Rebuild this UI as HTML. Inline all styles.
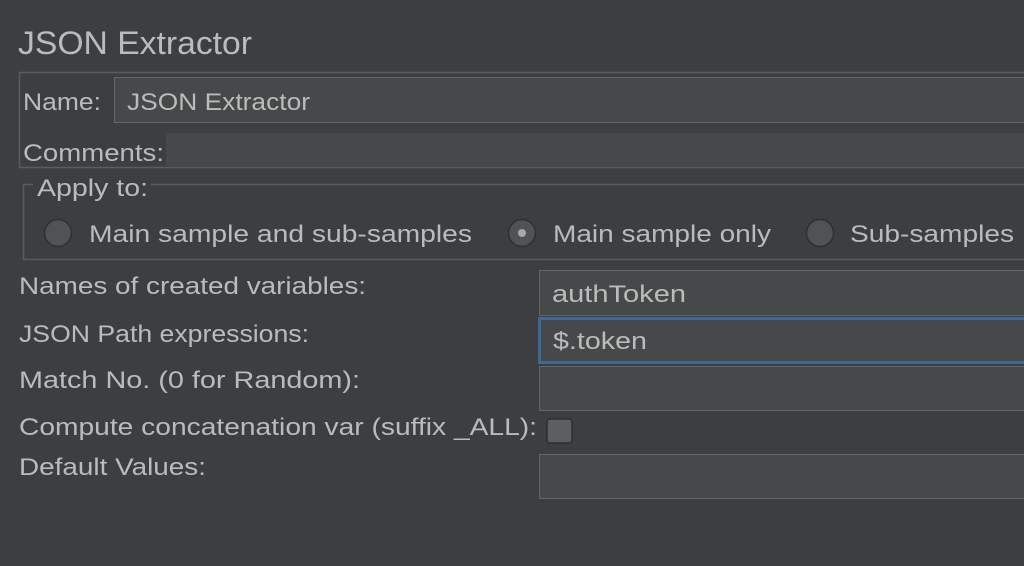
<!DOCTYPE html>
<html><head><meta charset="utf-8"><style>
html,body{margin:0;padding:0;background:#3c3f41;}
svg{display:block}
text{font-family:"Liberation Sans","DejaVu Sans",sans-serif;fill:#bbbbbb;}
</style></head><body>
<svg width="1024" height="566" viewBox="0 0 1024 566" xmlns="http://www.w3.org/2000/svg">
<rect width="1024" height="566" fill="#3c3f41"/>
<text x="18" y="54" font-size="32" textLength="234" lengthAdjust="spacingAndGlyphs">JSON Extractor</text>
<rect x="19.5" y="72.5" width="1010" height="95" fill="none" stroke="#5a5d60" stroke-width="1.5"/>
<rect x="114.5" y="77.5" width="915" height="45" fill="#45494a" stroke="#666" stroke-width="1"/>
<text x="23" y="110" font-size="24" textLength="78" lengthAdjust="spacingAndGlyphs">Name:</text>
<text x="127" y="110" font-size="24" textLength="183" lengthAdjust="spacingAndGlyphs">JSON Extractor</text>
<rect x="166" y="133" width="860" height="33" fill="#45494a"/>
<text x="23" y="161" font-size="24" textLength="141" lengthAdjust="spacingAndGlyphs">Comments:</text>
<path d="M33 184.5 H23.5 V259.5 H1030 M151 184.5 H1030" fill="none" stroke="#5a5d60" stroke-width="1.5"/>
<text x="37" y="196" font-size="24" textLength="111" lengthAdjust="spacingAndGlyphs">Apply to:</text>
<circle cx="58" cy="233" r="13.5" fill="#505356" stroke="#2d2f31" stroke-width="1.5"/>
<circle cx="522" cy="233" r="13.5" fill="#505356" stroke="#2d2f31" stroke-width="1.5"/>
<circle cx="522" cy="233" r="4" fill="#a8a8a8"/>
<circle cx="820" cy="233" r="13.5" fill="#505356" stroke="#2d2f31" stroke-width="1.5"/>
<text x="89" y="242" font-size="24" textLength="383" lengthAdjust="spacingAndGlyphs">Main sample and sub-samples</text>
<text x="553" y="242" font-size="24" textLength="218" lengthAdjust="spacingAndGlyphs">Main sample only</text>
<text x="850" y="242" font-size="24" textLength="164" lengthAdjust="spacingAndGlyphs">Sub-samples</text>
<rect x="539.5" y="270.5" width="490" height="45" fill="#45494a" stroke="#666"/>
<rect x="539.5" y="318.5" width="490" height="44" fill="#45494a" stroke="#3d6a94" stroke-width="3"/>
<rect x="539.5" y="366.5" width="490" height="44" fill="#45494a" stroke="#666"/>
<rect x="539.5" y="454.5" width="490" height="44" fill="#45494a" stroke="#666"/>
<rect x="547" y="419" width="25" height="24" rx="3" fill="#5c5f61" stroke="#2d2f31" stroke-width="1.5"/>
<text x="552" y="302" font-size="24" textLength="134" lengthAdjust="spacingAndGlyphs">authToken</text>
<text x="553" y="349" font-size="24" textLength="94" lengthAdjust="spacingAndGlyphs">$.token</text>
<text x="19" y="294" font-size="24" textLength="347" lengthAdjust="spacingAndGlyphs">Names of created variables:</text>
<text x="19" y="342" font-size="24" textLength="290" lengthAdjust="spacingAndGlyphs">JSON Path expressions:</text>
<text x="19" y="388" font-size="24" textLength="341" lengthAdjust="spacingAndGlyphs">Match No. (0 for Random):</text>
<text x="19" y="435" font-size="24" textLength="518" lengthAdjust="spacingAndGlyphs">Compute concatenation var (suffix _ALL):</text>
<text x="19" y="475" font-size="24" textLength="187" lengthAdjust="spacingAndGlyphs">Default Values:</text>
</svg>
</body></html>
